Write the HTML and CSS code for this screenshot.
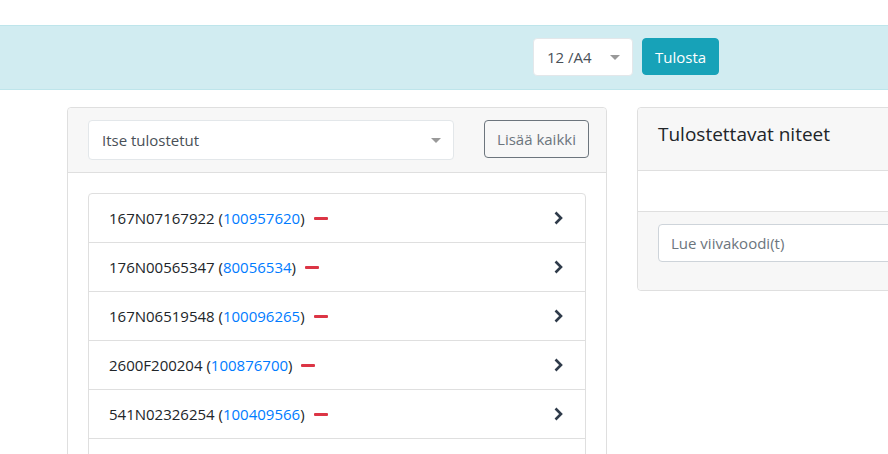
FILE: index.html
```html
<!DOCTYPE html>
<html lang="fi">
<head>
<meta charset="utf-8">
<title>Tulostus</title>
<link rel="stylesheet" href="styles.css">
</head>
<body>
<div class="topnav"></div>
<div class="printbar">
  <div class="select select-small"><span>12 /A4</span><span class="caret"></span></div>
  <button class="btn btn-info">Tulosta</button>
</div>
<main class="main">
  <section class="card card-left">
    <div class="card-header header-tools">
      <div class="select select-wide"><span>Itse tulostetut</span><span class="caret"></span></div>
      <button class="btn btn-outline">Lisää kaikki</button>
    </div>
    <div class="card-body">
      <ul class="list">
        <li class="item"><span class="label">167N07167922 (<a class="link">100957620</a>)<span class="minus"></span></span><svg class="chev" width="16" height="16" viewBox="0 0 16 16"><path d="M5.5 2.5 L11 8 L5.5 13.5" fill="none" stroke="#2f3b4a" stroke-width="2.6"/></svg></li>
        <li class="item"><span class="label">176N00565347 (<a class="link">80056534</a>)<span class="minus"></span></span><svg class="chev" width="16" height="16" viewBox="0 0 16 16"><path d="M5.5 2.5 L11 8 L5.5 13.5" fill="none" stroke="#2f3b4a" stroke-width="2.6"/></svg></li>
        <li class="item"><span class="label">167N06519548 (<a class="link">100096265</a>)<span class="minus"></span></span><svg class="chev" width="16" height="16" viewBox="0 0 16 16"><path d="M5.5 2.5 L11 8 L5.5 13.5" fill="none" stroke="#2f3b4a" stroke-width="2.6"/></svg></li>
        <li class="item"><span class="label">2600F200204 (<a class="link">100876700</a>)<span class="minus"></span></span><svg class="chev" width="16" height="16" viewBox="0 0 16 16"><path d="M5.5 2.5 L11 8 L5.5 13.5" fill="none" stroke="#2f3b4a" stroke-width="2.6"/></svg></li>
        <li class="item"><span class="label">541N02326254 (<a class="link">100409566</a>)<span class="minus"></span></span><svg class="chev" width="16" height="16" viewBox="0 0 16 16"><path d="M5.5 2.5 L11 8 L5.5 13.5" fill="none" stroke="#2f3b4a" stroke-width="2.6"/></svg></li>
        <li class="item"><span class="label">&nbsp;</span></li>
      </ul>
    </div>
  </section>
  <section class="card card-right">
    <div class="card-header">
      <h5 class="title">Tulostettavat niteet</h5>
    </div>
    <div class="card-body empty"></div>
    <div class="card-footer">
      <div class="input">Lue viivakoodi(t)</div>
    </div>
  </section>
</main>
</body>
</html>
```
FILE: styles.css
```css
html, body {
  margin: 0;
  padding: 0;
  overflow: hidden;
  height: 454px;
}
body {
  font-family: "Open Sans", "Noto Sans", sans-serif;
  font-size: 15px;
  color: #212529;
  background: #fff;
}
.topnav {
  height: 25px;
}
.printbar {
  display: flex;
  align-items: flex-start;
  gap: 9px;
  background: #d1ecf1;
  border-top: 1px solid #bee5eb;
  border-bottom: 1px solid #bee5eb;
  padding: 12px 0 13px 533px;
  height: 38px;
}
.select {
  box-sizing: border-box;
  display: flex;
  align-items: center;
  justify-content: space-between;
  height: 38px;
  background: #fff;
  border: 1px solid #e3e7ea;
  border-radius: 4px;
  color: #495057;
  padding: 0 12px 0 13px;
}
.select-small {
  width: 100px;
}
.select-wide {
  width: 366px;
  height: 40px;
}
.caret {
  width: 0;
  height: 0;
  border-left: 5px solid transparent;
  border-right: 5px solid transparent;
  border-top: 5px solid #999;
}
.btn {
  box-sizing: border-box;
  font-family: inherit;
  font-size: 15px;
  height: 38px;
  border-radius: 4px;
  padding: 0 12px;
  cursor: pointer;
}
.btn-info {
  width: 77px;
  height: 37px;
  background: #17a2b8;
  border: 1px solid #17a2b8;
  color: #fff;
}
.btn-outline {
  width: 105px;
  background: transparent;
  border: 1px solid #6c757d;
  color: #6c757d;
  padding: 0;
}
.main {
  display: flex;
  gap: 30px;
  padding: 17px 0 0 67px;
  width: 1200px;
  align-items: flex-start;
}
.card {
  box-sizing: border-box;
  width: 540px;
  border: 1px solid #dfdfdf;
  border-radius: 4px;
  background: #fff;
  flex: none;
}
.card-header {
  background: #f7f7f7;
  border-bottom: 1px solid #dfdfdf;
  padding: 12px 20px;
  border-radius: 4px 4px 0 0;
}
.header-tools {
  display: flex;
  justify-content: space-between;
  align-items: flex-start;
  padding-right: 17px;
}
.card-body {
  padding: 20px;
}
.list {
  list-style: none;
  margin: 0;
  padding: 0;
  border: 1px solid #dfdfdf;
  border-radius: 4px;
  width: 498px;
  box-sizing: border-box;
}
.item {
  display: flex;
  align-items: center;
  justify-content: space-between;
  padding: 12px 19px 12px 20px;
  line-height: 24px;
  border-bottom: 1px solid #dfdfdf;
}
.item:last-child {
  border-bottom: none;
}
.label {
  display: flex;
  align-items: center;
  white-space: pre;
}
.link {
  color: #007bff;
  text-decoration: none;
}
.minus {
  display: inline-block;
  width: 14px;
  height: 3px;
  background: #dc3545;
  border-radius: 1px;
  margin-left: 9px;
}
.chev {
  flex: none;
}
.title {
  margin: 0 0 10px;
  font-size: 19px;
  font-weight: 400;
  line-height: 28px;
}
.empty {
  height: 0;
}
.card-footer {
  background: #f7f7f7;
  border-top: 1px solid #dfdfdf;
  padding: 12px 20px 28px;
  border-radius: 0 0 4px 4px;
}
.input {
  box-sizing: border-box;
  height: 38px;
  background: #fff;
  border: 1px solid #ced4da;
  border-radius: 4px;
  color: #6c757d;
  display: flex;
  align-items: center;
  padding: 0 12px;
}
```
